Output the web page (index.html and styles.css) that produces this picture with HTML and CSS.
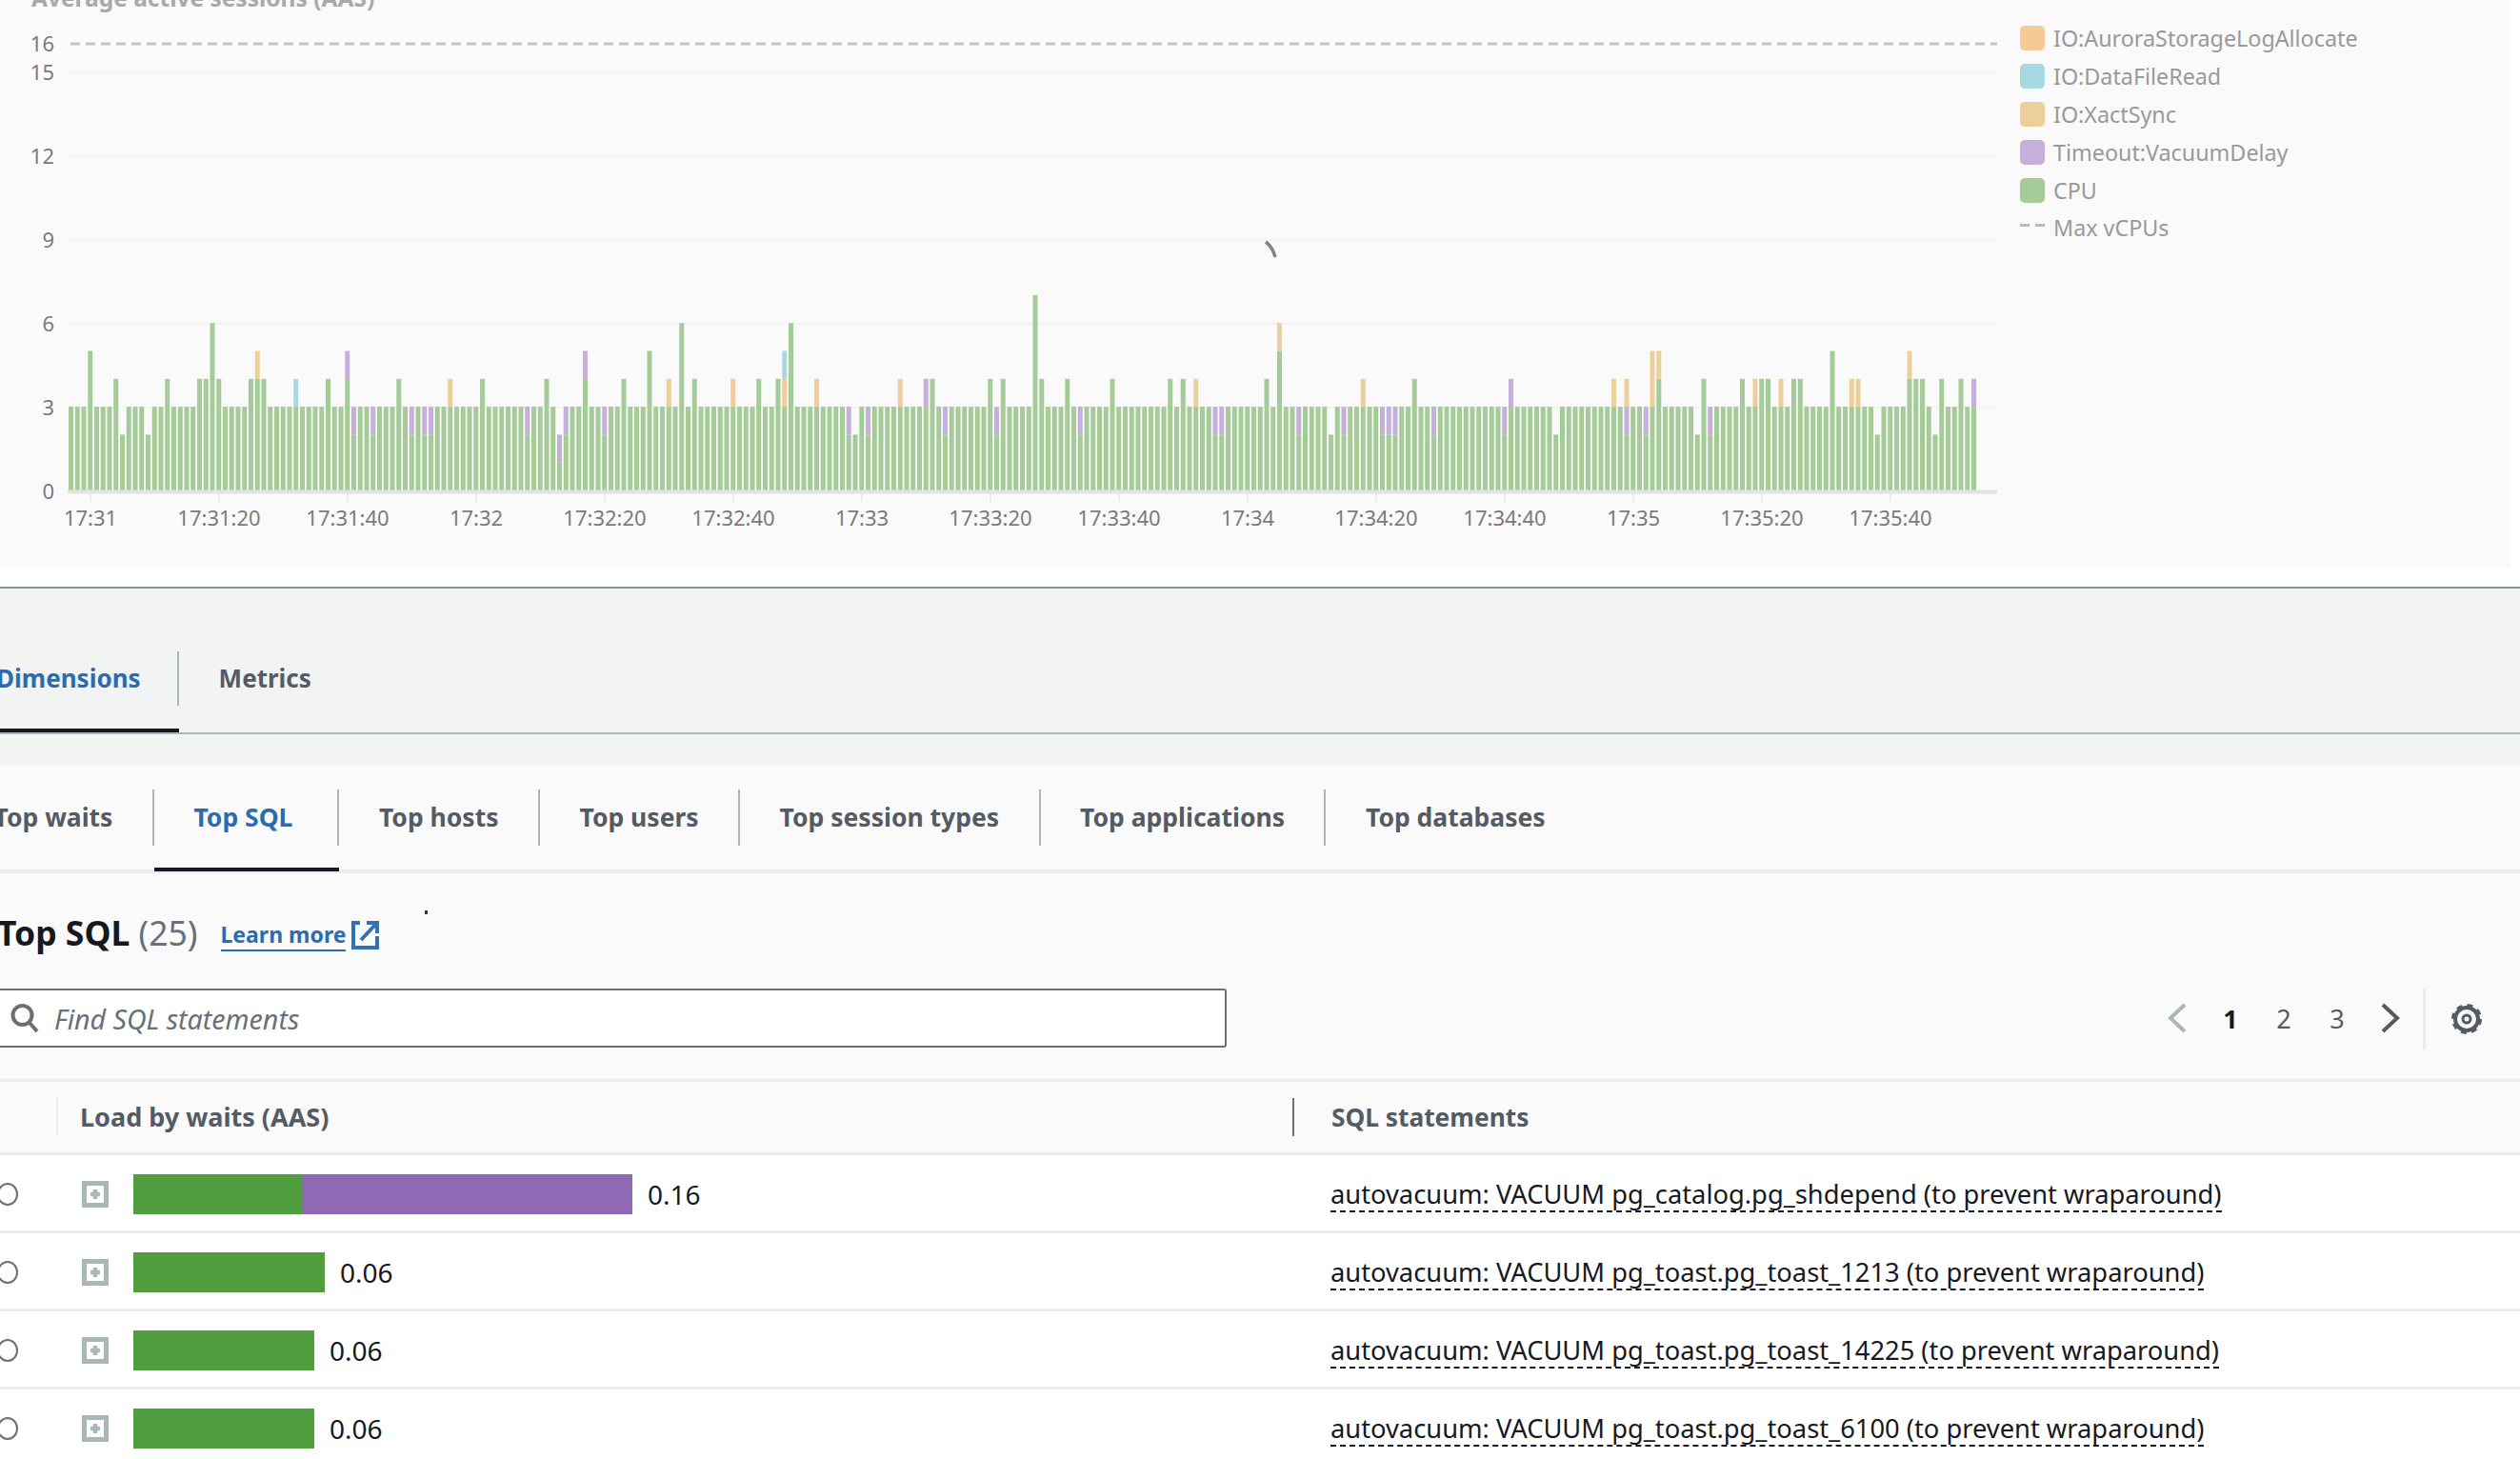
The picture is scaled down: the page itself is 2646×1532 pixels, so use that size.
FILE: index.html
```html
<!DOCTYPE html>
<html>
<head>
    <title>Performance Insights</title>
    <link rel="stylesheet" href="styles.css">
</head>
<body>
    <div class="chart-panel">
        <svg class="chart" id="chart" width="2110" height="596">
            <text class="chart-title" x="33" y="7">Average active sessions (AAS)</text>
            <g class="grid">
                <line x1="72" x2="2097" y1="75.5" y2="75.5"></line>
                <line x1="72" x2="2097" y1="163.5" y2="163.5"></line>
                <line x1="72" x2="2097" y1="251.5" y2="251.5"></line>
                <line x1="72" x2="2097" y1="339.5" y2="339.5"></line>
                <line x1="72" x2="2097" y1="427.5" y2="427.5"></line>
            </g>
            <line class="max-line" x1="74" x2="2097" y1="46" y2="46"></line>
            <g class="y-labels">
                <text x="57" y="54">16</text>
                <text x="57" y="84">15</text>
                <text x="57" y="172">12</text>
                <text x="57" y="260">9</text>
                <text x="57" y="348">6</text>
                <text x="57" y="436">3</text>
                <text x="57" y="524">0</text>
            </g>
            <g id="bars"></g>
            <line class="axis" x1="71" x2="2097" y1="516.5" y2="516.5"></line>
            <g class="x-labels">
                <text x="95" y="552">17:31</text>
                <text x="230" y="552">17:31:20</text>
                <text x="365" y="552">17:31:40</text>
                <text x="500" y="552">17:32</text>
                <text x="635" y="552">17:32:20</text>
                <text x="770" y="552">17:32:40</text>
                <text x="905" y="552">17:33</text>
                <text x="1040" y="552">17:33:20</text>
                <text x="1175" y="552">17:33:40</text>
                <text x="1310" y="552">17:34</text>
                <text x="1445" y="552">17:34:20</text>
                <text x="1580" y="552">17:34:40</text>
                <text x="1715" y="552">17:35</text>
                <text x="1850" y="552">17:35:20</text>
                <text x="1985" y="552">17:35:40</text>
            </g>
            <path class="stray" d="M1329 254Q1336 259 1339 270"></path>
        </svg>
        <div class="legend">
            <div class="legend-item"><span class="swatch swatch-aurora"></span>IO:AuroraStorageLogAllocate</div>
            <div class="legend-item"><span class="swatch swatch-read"></span>IO:DataFileRead</div>
            <div class="legend-item"><span class="swatch swatch-xact"></span>IO:XactSync</div>
            <div class="legend-item"><span class="swatch swatch-vacuum"></span>Timeout:VacuumDelay</div>
            <div class="legend-item"><span class="swatch swatch-cpu"></span>CPU</div>
            <div class="legend-item"><span class="swatch-dash"></span>Max vCPUs</div>
        </div>
    </div>

    <div class="main">
        <div class="tabs main-tabs">
            <div class="tab active"><span class="tab-label">Dimensions</span></div>
            <div class="tab"><span class="tab-label no-divider">Metrics</span></div>
        </div>

        <div class="panel">
            <div class="tabs sub-tabs">
                <div class="tab"><span class="tab-label">Top waits</span></div>
                <div class="tab active"><span class="tab-label">Top SQL</span></div>
                <div class="tab"><span class="tab-label">Top hosts</span></div>
                <div class="tab"><span class="tab-label">Top users</span></div>
                <div class="tab"><span class="tab-label">Top session types</span></div>
                <div class="tab"><span class="tab-label">Top applications</span></div>
                <div class="tab"><span class="tab-label no-divider">Top databases</span></div>
            </div>

            <div class="section-head">
                <h2>Top SQL <span class="count">(25)</span></h2>
                <a class="learn-more" href="#">Learn more</a>
                <svg class="ext-icon" width="29" height="30" viewBox="0 0 29 30">
                    <path d="M9 2H2V28H27V16M16 2H27V13M10 20L26 3"></path>
                </svg>
                <span class="speck"></span>
            </div>

            <div class="toolbar">
                <div class="search">
                    <svg class="search-icon" width="30" height="32" viewBox="0 0 30 32">
                        <circle cx="12.5" cy="13" r="10"></circle>
                        <path d="M20 21L28 30"></path>
                    </svg>
                    <span class="placeholder">Find SQL statements</span>
                </div>
                <div class="tools">
                    <div class="pager">
                        <span class="page-item">
                            <svg class="chevron disabled" width="20" height="32" viewBox="0 0 20 32"><path d="M18 2L3 16L18 30"></path></svg>
                        </span>
                        <span class="page-item current">1</span>
                        <span class="page-item">2</span>
                        <span class="page-item">3</span>
                        <span class="page-item">
                            <svg class="chevron" width="20" height="32" viewBox="0 0 20 32"><path d="M2 2L17 16L2 30"></path></svg>
                        </span>
                    </div>
                    <div class="settings">
                        <svg class="gear" width="34" height="34" viewBox="0 0 34 34">
                            <circle class="gear-ring" cx="17" cy="17" r="12"></circle>
                            <circle class="gear-teeth" cx="17" cy="17" r="14.5"></circle>
                            <circle class="gear-hub" cx="17" cy="17" r="4"></circle>
                        </svg>
                    </div>
                </div>
            </div>

            <div class="table">
                <div class="table-head">
                    <div class="th-load">Load by waits (AAS)</div>
                    <div class="th-sql">SQL statements</div>
                </div>
                <div class="row">
                    <div class="cell-load">
                        <span class="radio"></span>
                        <svg class="expand" width="28" height="28" viewBox="0 0 28 28">
                            <rect x="2.5" y="2.5" width="23" height="23"></rect>
                            <path d="M14 9V19M9 14H19"></path>
                        </svg>
                        <div class="bar">
                            <span class="bar-cpu" style="width: 178px"></span>
                            <span class="bar-vacuum" style="width: 346px"></span>
                        </div>
                        <span class="value">0.16</span>
                    </div>
                    <div class="cell-sql"><a href="#">autovacuum: VACUUM pg_catalog.pg_shdepend (to prevent wraparound)</a></div>
                </div>
                <div class="row">
                    <div class="cell-load">
                        <span class="radio"></span>
                        <svg class="expand" width="28" height="28" viewBox="0 0 28 28">
                            <rect x="2.5" y="2.5" width="23" height="23"></rect>
                            <path d="M14 9V19M9 14H19"></path>
                        </svg>
                        <div class="bar">
                            <span class="bar-cpu" style="width: 201px"></span>
                        </div>
                        <span class="value">0.06</span>
                    </div>
                    <div class="cell-sql"><a href="#">autovacuum: VACUUM pg_toast.pg_toast_1213 (to prevent wraparound)</a></div>
                </div>
                <div class="row">
                    <div class="cell-load">
                        <span class="radio"></span>
                        <svg class="expand" width="28" height="28" viewBox="0 0 28 28">
                            <rect x="2.5" y="2.5" width="23" height="23"></rect>
                            <path d="M14 9V19M9 14H19"></path>
                        </svg>
                        <div class="bar">
                            <span class="bar-cpu" style="width: 190px"></span>
                        </div>
                        <span class="value">0.06</span>
                    </div>
                    <div class="cell-sql"><a href="#">autovacuum: VACUUM pg_toast.pg_toast_14225 (to prevent wraparound)</a></div>
                </div>
                <div class="row">
                    <div class="cell-load">
                        <span class="radio"></span>
                        <svg class="expand" width="28" height="28" viewBox="0 0 28 28">
                            <rect x="2.5" y="2.5" width="23" height="23"></rect>
                            <path d="M14 9V19M9 14H19"></path>
                        </svg>
                        <div class="bar">
                            <span class="bar-cpu" style="width: 190px"></span>
                        </div>
                        <span class="value">0.06</span>
                    </div>
                    <div class="cell-sql"><a href="#">autovacuum: VACUUM pg_toast.pg_toast_6100 (to prevent wraparound)</a></div>
                </div>
            </div>
        </div>
    </div>

    <script src="chart.js"></script>
</body>
</html>
```

FILE: styles.css
```css
* {
    margin: 0;
    padding: 0;
    box-sizing: border-box;
    font-family: "Noto Sans", "Open Sans", sans-serif;
}

html, body {
    width: 2646px;
    height: 1532px;
    overflow: hidden;
    background: white;
}

/* chart */
.chart-panel {
    display: flex;
    width: 2636px;
    height: 596px;
    margin-bottom: 20px;
    background: #fafafa;
}

.chart {
    display: block;
    flex: none;
}

.chart-title {
    font-size: 24.5px;
    font-weight: 700;
    fill: #a9a9a9;
}

.grid line {
    stroke: #f2f2f2;
    stroke-width: 2;
}

.max-line {
    stroke: #c4c4c4;
    stroke-width: 3;
    stroke-dasharray: 10 6;
}

.y-labels text {
    font-size: 22px;
    fill: #7b7b7b;
    text-anchor: end;
}

.x-labels text {
    font-size: 22px;
    fill: #7b7b7b;
    text-anchor: middle;
}

.axis {
    stroke: #e3e3e3;
    stroke-width: 4;
}

.tick {
    stroke: #ececec;
    stroke-width: 2;
}

.stray {
    fill: none;
    stroke: #848484;
    stroke-width: 3.5;
}

.seg-cpu { fill: #a4cb98; }
.seg-aurora { fill: #f5ca95; }
.seg-read { fill: #a8d9e2; }
.seg-xact { fill: #ecd09b; }
.seg-vacuum { fill: #c4b0d8; }

.legend {
    margin-left: 11px;
    padding-top: 20px;
}

.legend-item {
    display: flex;
    align-items: center;
    height: 39.9px;
    font-size: 23.3px;
    color: #999;
}

.swatch,
.swatch-dash {
    flex: none;
    width: 26px;
    margin-right: 9px;
}

.swatch {
    height: 26px;
    border-radius: 5px;
}

.swatch-aurora { background: #f5ca95; }
.swatch-read { background: #a8d9e2; }
.swatch-xact { background: #ecd09b; }
.swatch-vacuum { background: #c4b0d8; }
.swatch-cpu { background: #a4cb98; }

.swatch-dash {
    height: 3px;
    margin-top: -6px;
    background: linear-gradient(90deg, #bbb 0 10px, transparent 10px 16px, #bbb 16px);
}

/* tabs */
.main {
    height: 916px;
    border-top: 2px solid #879596;
    background: #f2f3f3;
}

.tabs {
    display: flex;
    font-weight: 700;
    color: #545b64;
}

.tab {
    flex: none;
    border-bottom: 4px solid transparent;
}

.tab-label {
    display: block;
    white-space: nowrap;
    border-right: 2px solid #aab7b8;
}

.tab-label.no-divider {
    border-right: none;
}

.tab.active {
    border-bottom-color: #16191f;
}

.tab.active .tab-label {
    color: #2b6cb0;
}

.main-tabs {
    font-size: 26px;
    border-bottom: 2px solid #aab7b8;
    margin-bottom: 33px;
}

.main-tabs .tab {
    padding: 66px 0 24px;
}

.main-tabs .tab:first-child {
    margin-left: -44px;
}

.main-tabs .tab-label {
    height: 57px;
    padding: 0 38px 0 40px;
    line-height: 57px;
}

.main-tabs .tab-label.no-divider {
    padding: 0 42px;
}

.sub-tabs {
    font-size: 26.5px;
    border-bottom: 4px solid #eaeded;
}

.sub-tabs .tab {
    padding: 25px 0 23px;
    margin-bottom: -2px;
}

.sub-tabs .tab:first-child {
    margin-left: -48px;
}

.sub-tabs .tab-label {
    height: 59px;
    padding: 0 41.5px;
    line-height: 59px;
}

.sub-tabs .tab.active .tab-label {
    padding-right: 47px;
}

.panel {
    height: 729px;
    background: #fafafa;
}

/* section heading */
.section-head {
    position: relative;
    display: flex;
    align-items: center;
    height: 121px;
}

.section-head h2 {
    margin: 2px 0 0 -3px;
    font-size: 35.5px;
    font-weight: 700;
    color: #16191f;
    white-space: nowrap;
}

.count {
    font-weight: 400;
    color: #687078;
}

.learn-more {
    margin: 9px 0 0 24px;
    font-size: 23px;
    font-weight: 700;
    line-height: 32px;
    color: #2b6cb0;
    text-decoration: none;
    border-bottom: 2px solid #2b6cb0;
}

.ext-icon {
    margin: 8px 0 0 6px;
}

.ext-icon path {
    fill: none;
    stroke: #2f72b8;
    stroke-width: 4;
}

.speck {
    position: absolute;
    left: 446px;
    top: 39px;
    width: 3px;
    height: 4px;
    background: #333;
}

/* search and pager */
.toolbar {
    display: flex;
    justify-content: space-between;
    height: 95px;
}

.search {
    display: flex;
    align-items: center;
    width: 1292px;
    height: 62px;
    margin-left: -4px;
    padding-left: 13px;
    background: white;
    border: 2px solid #687078;
    border-radius: 3px;
}

.search-icon {
    flex: none;
}

.search-icon circle,
.search-icon path {
    fill: none;
    stroke: #687078;
    stroke-width: 4;
}

.placeholder {
    margin-left: 16px;
    font-size: 28.6px;
    font-style: italic;
    color: #687078;
}

.tools {
    display: flex;
    align-items: flex-start;
    padding-right: 39px;
}

.pager {
    display: flex;
    align-items: center;
    height: 62px;
}

.page-item {
    display: flex;
    align-items: center;
    justify-content: center;
    width: 56px;
    font-size: 27px;
    color: #545b64;
}

.page-item.current {
    font-weight: 700;
    color: #16191f;
}

.chevron path {
    fill: none;
    stroke: #545b64;
    stroke-width: 4;
}

.chevron.disabled path {
    stroke: #aab7b8;
}

.settings {
    display: flex;
    align-items: center;
    height: 64px;
    margin-left: 6px;
    padding-left: 26px;
    border-left: 3px solid #eaeded;
}

.gear circle {
    fill: none;
    stroke: #545b64;
}

.gear-ring { stroke-width: 4; }
.gear-hub { stroke-width: 3; }

.gear-teeth {
    stroke-width: 3;
    stroke-dasharray: 6 5.39;
}

/* table */
.table-head {
    display: flex;
    align-items: center;
    height: 80px;
    border-top: 3px solid #eaeded;
    border-bottom: 3px solid #eaeded;
    font-weight: 700;
    color: #545b64;
}

.th-load {
    width: 1298px;
    margin-left: 59px;
    padding-left: 23px;
    border-left: 2px solid #eaeded;
    font-size: 27px;
    line-height: 40px;
}

.th-sql {
    padding-left: 39px;
    border-left: 2px solid #687078;
    font-size: 26.3px;
    line-height: 40px;
}

.row {
    display: flex;
    align-items: center;
    height: 82px;
    padding-top: 2px;
    background: white;
    border-bottom: 3px solid #eaeded;
}

.cell-load {
    display: flex;
    align-items: center;
    flex: none;
    width: 1357px;
}

.radio {
    flex: none;
    width: 22px;
    height: 24px;
    margin-left: -3px;
    border: 2px solid #687078;
    border-radius: 50%;
}

.expand {
    flex: none;
    margin-left: 67px;
}

.expand rect {
    fill: white;
    stroke: #aab7b8;
    stroke-width: 5;
}

.expand path {
    fill: none;
    stroke: #aab7b8;
    stroke-width: 4.5;
}

.bar {
    display: flex;
    height: 42px;
    margin-left: 26px;
}

.bar-cpu { background: #519e3e; }
.bar-vacuum { background: #8f69b5; }

.value {
    margin-left: 16px;
    font-size: 28px;
    color: #16191f;
}

.cell-sql {
    padding-left: 40px;
    font-size: 27.3px;
    white-space: nowrap;
}

.cell-sql a {
    display: inline-block;
    line-height: 34px;
    color: #16191f;
    text-decoration: none;
    border-bottom: 2px dashed #16191f;
}
```

FILE: chart.js
```js
// one bar per second, most of them plain CPU at 3 AAS
const BAR_COUNT = 297;
const BAR_STEP = 6.75;
const BAR_WIDTH = 5;
const UNIT = 29.3;
const BASE_Y = 515;

// index -> stacked values from the axis up
const cpu = (n) => [['cpu', n]];
const stack = (...parts) => parts;
const vac = [['cpu', 2], ['vacuum', 1]];
const xact = [['cpu', 3], ['xact', 1]];
const aurora = [['cpu', 3], ['aurora', 1]];

const special = {
    3: cpu(5), 7: cpu(4), 8: cpu(2), 12: cpu(2), 15: cpu(4), 20: cpu(4), 21: cpu(4), 22: cpu(6), 23: cpu(4),
    28: cpu(4), 29: stack(['cpu', 4], ['xact', 1]), 30: cpu(4), 35: stack(['cpu', 3], ['read', 1]), 40: cpu(4),
    43: stack(['cpu', 4], ['vacuum', 1]), 44: vac, 47: vac, 51: cpu(4), 53: vac, 55: vac, 56: vac, 59: xact,
    64: cpu(4), 71: vac, 74: cpu(4), 76: stack(['cpu', 1], ['vacuum', 1]), 77: vac,
    80: stack(['cpu', 4], ['vacuum', 1]), 83: vac, 86: cpu(4), 90: cpu(5),
    93: xact, 95: cpu(6), 97: cpu(4), 103: aurora, 107: cpu(4), 110: cpu(4),
    111: stack(['cpu', 3], ['aurora', 1], ['read', 1]), 112: cpu(6), 116: aurora, 121: vac, 122: cpu(2), 124: vac,
    129: xact, 133: stack(['cpu', 3], ['vacuum', 1]), 134: cpu(4), 136: vac, 143: cpu(4), 144: vac, 145: cpu(4),
    150: cpu(7), 151: cpu(4), 155: cpu(4), 157: vac, 162: cpu(4), 171: cpu(4), 173: cpu(4), 175: xact,
    178: vac, 179: vac, 186: cpu(4), 188: stack(['cpu', 5], ['xact', 1]), 191: vac, 196: cpu(2),
    198: vac, 201: xact, 204: vac, 205: vac, 206: vac, 209: cpu(4), 212: vac, 223: vac,
    224: stack(['cpu', 3], ['vacuum', 1]), 231: cpu(2), 240: xact,
    242: stack(['cpu', 2], ['vacuum', 1], ['xact', 1]), 245: vac, 246: stack(['cpu', 3], ['xact', 2]),
    247: stack(['cpu', 4], ['xact', 1]), 253: cpu(2), 254: cpu(4), 255: vac, 260: cpu(4), 262: xact,
    263: cpu(4), 264: cpu(4), 266: xact, 268: cpu(4), 269: cpu(4), 274: cpu(5), 277: xact, 278: xact,
    281: cpu(2), 286: stack(['cpu', 4], ['xact', 1]), 287: cpu(4), 288: cpu(4), 290: cpu(2), 291: cpu(4),
    294: cpu(4), 296: stack(['cpu', 3], ['vacuum', 1])
};

const SVG_NS = 'http://www.w3.org/2000/svg';
const bars = document.getElementById('bars');

function addRect(x, y, height, name) {
    const rect = document.createElementNS(SVG_NS, 'rect');
    rect.setAttribute('x', x);
    rect.setAttribute('y', y);
    rect.setAttribute('width', BAR_WIDTH);
    rect.setAttribute('height', height);
    rect.setAttribute('class', 'seg-' + name);
    bars.appendChild(rect);
}

for (let i = 0; i < BAR_COUNT; i++) {
    const x = 72 + i * BAR_STEP;
    let y = BASE_Y;
    (special[i] || cpu(3)).forEach(([name, value]) => {
        const height = value * UNIT;
        y -= height;
        addRect(x, y, height, name);
    });
}

// x axis ticks sit under the labels
for (let t = 95; t <= 1985; t += 135) {
    const tick = document.createElementNS(SVG_NS, 'line');
    tick.setAttribute('x1', t);
    tick.setAttribute('x2', t);
    tick.setAttribute('y1', 518);
    tick.setAttribute('y2', 527);
    tick.setAttribute('class', 'tick');
    bars.appendChild(tick);
}
```
